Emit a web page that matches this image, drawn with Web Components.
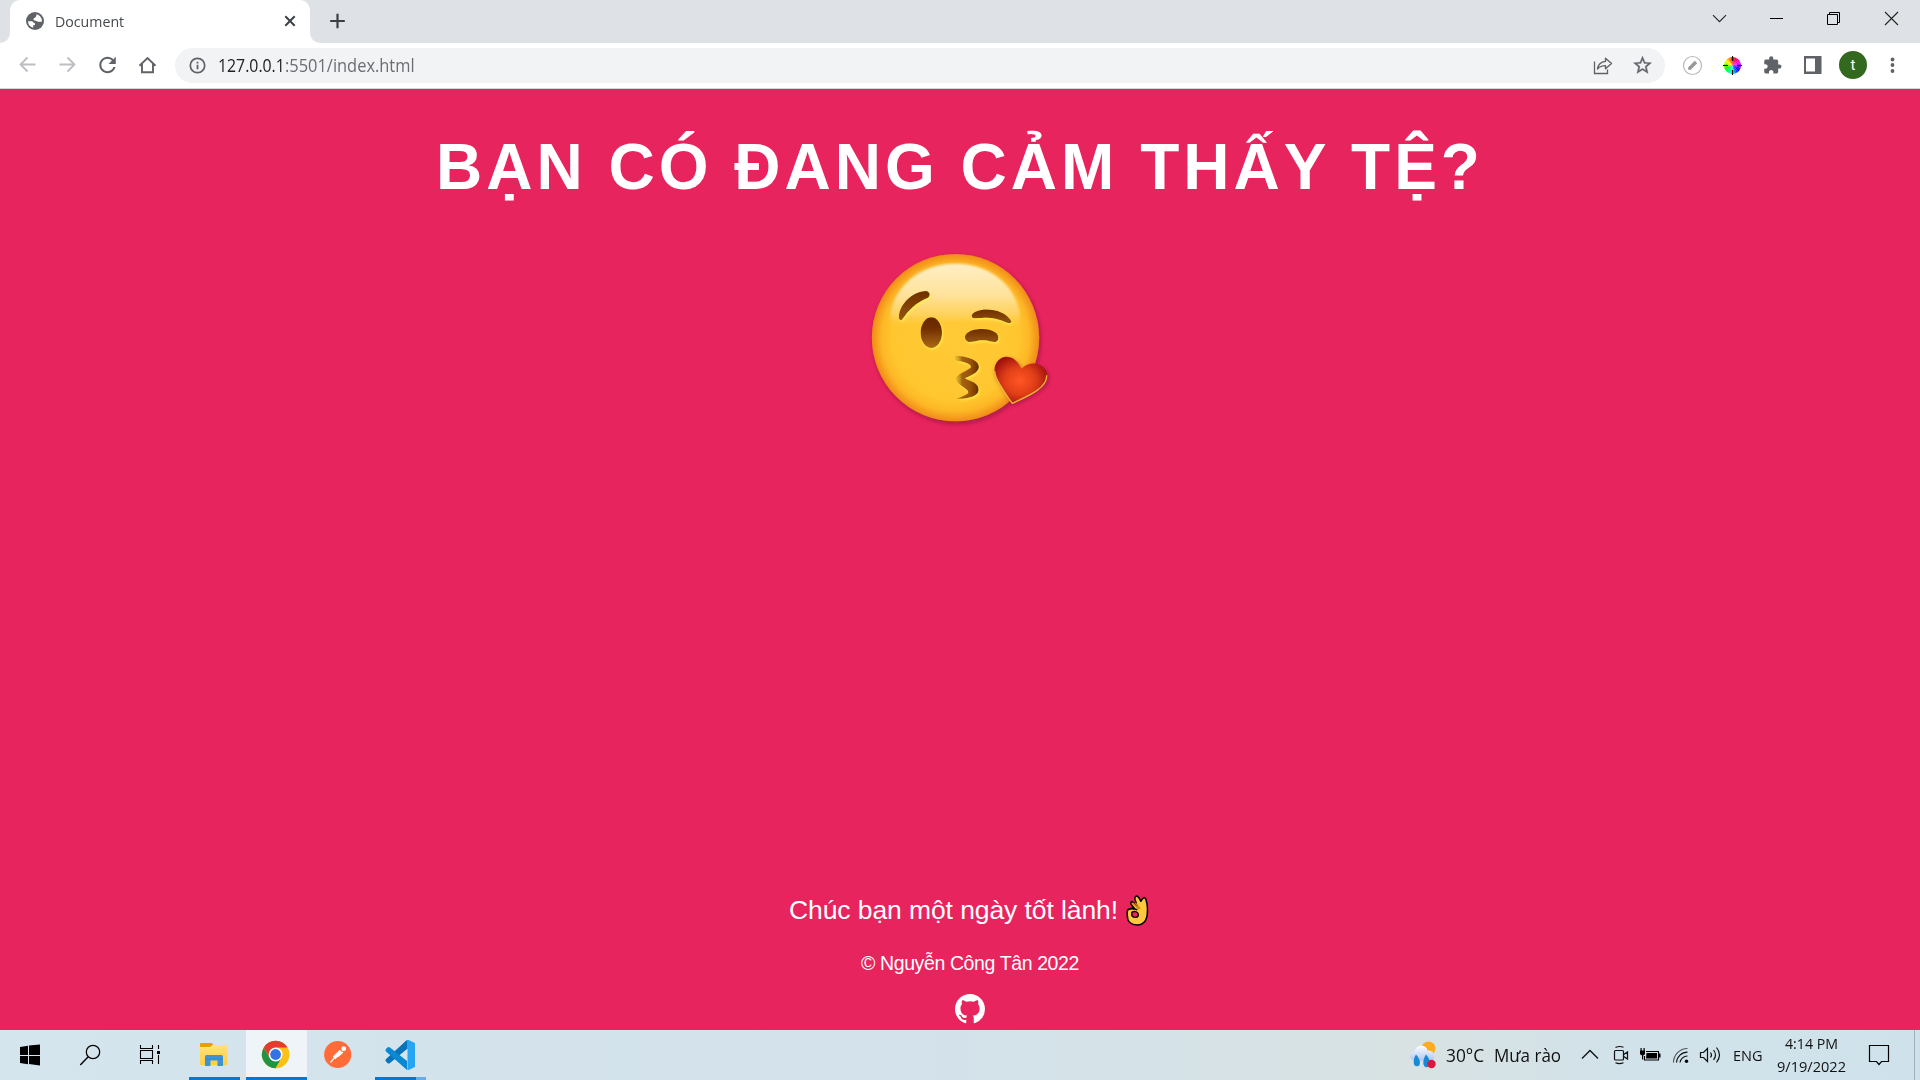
<!DOCTYPE html>
<html lang="vi">
<head>
<meta charset="utf-8">
<title>Document</title>
<style>
html,body{margin:0;height:100%;overflow:hidden;background:#e7245d}
</style>
</head>
<body>
<desktop-screen>
  <tab-strip slot="top"></tab-strip>
  <tool-bar slot="top"></tool-bar>
  <mood-page>
    <fit-text slot="title" width="1048">BẠN CÓ ĐANG CẢM THẤY TỆ?</fit-text>
    <fit-text slot="wish" width="329">Chúc bạn một ngày tốt lành!</fit-text>
    <fit-text slot="copy" width="218">© Nguyễn Công Tân 2022</fit-text>
  </mood-page>
  <task-bar slot="bottom"></task-bar>
</desktop-screen>
<script>
const wheel = Array.from({length:24},(_,i)=>{
  const a=(i*15-90)*Math.PI/180,b=((i+1)*15-89.5)*Math.PI/180,r=8.5;
  return `<path fill="hsl(${(360-i*15)%360} 100% 50%)" d="M19.5 22.5L${19.5+r*Math.cos(a)} ${22.5+r*Math.sin(a)}L${19.5+r*Math.cos(b)} ${22.5+r*Math.sin(b)}Z"/>`;
}).join('');

// name: [width, height, markup, optional viewBox]
const ICONS = {
  globe:[18,18,`<circle cx="9" cy="9" r="9" fill="#5f6368"/><path fill="#fff" d="M2 9.300L5.600 9.200C7.300 9.300 7.300 11.200 9 11.200L9 13 7.200 13.200 7.200 15.700A7 7 0 0 1 2 9.300zM10.200 2.200A7 7 0 0 1 16 9.400C14.500 10.300 13.400 9.300 12.500 10 11.500 8.800 9.600 9.300 8 8.200 6.700 7.300 7.600 5.800 9.300 5.700 9.300 4.400 11 4.500 10.200 2.200z"/>`],
  tabx:[12,12,`<path d="M1.300 1.300l9.400 9.400M10.700 1.300l-9.400 9.400" stroke="#3c4043" stroke-width="2"/>`],
  plus:[16,16,`<path d="M8.500 .7v14.600M1.200 8h14.600" stroke="#3c4043" stroke-width="2.200"/>`],
  caret:[57,37,`<path d="M21 15.200l6.500 6.500 6.500-6.500" fill="none" stroke="#222" stroke-width="1.100"/>`],
  min:[57,37,`<path d="M21 18.500h13" stroke="#000"/>`],
  restore:[57,37,`<path d="M21.500 14.500h10v10h-10zM23.500 14.500v-2h10v10h-2" fill="none" stroke="#000"/>`],
  close:[57,37,`<path d="M22 12l13 13M35 12l-13 13" stroke="#222" stroke-width="1.100"/>`],
  back:[40,45,`<path d="M27.500 21.500H12.500M19.500 14.500l-7 7 7 7" fill="none" stroke="#bcbec1" stroke-width="1.800"/>`],
  fwd:[40,45,`<path d="M11.500 21.500h15M19.500 14.500l7 7-7 7" fill="none" stroke="#bcbec1" stroke-width="1.800"/>`],
  reload:[40,45,`<path transform="translate(7.200 9.600) scale(1.030)" fill="#5f6368" d="M17.650 6.350C16.200 4.900 14.210 4 12 4c-4.420 0-7.990 3.580-7.990 8s3.570 8 7.990 8c3.730 0 6.840-2.550 7.730-6h-2.080c-.82 2.330-3.040 4-5.650 4-3.310 0-6-2.690-6-6s2.690-6 6-6c1.660 0 3.140.69 4.220 1.780L13 11h7V4l-2.350 2.350z"/>`],
  home:[40,45,`<path d="M11.500 22.700L19.500 15l8 7.700M14 21v8.300h11V21" fill="none" stroke="#5f6368" stroke-width="1.900"/>`],
  info:[17,17,`<circle cx="8.500" cy="8.500" r="7.200" fill="none" stroke="#5f6368" stroke-width="1.700"/><path d="M8.500 7.700v4.500M8.500 4.700v1.700" stroke="#5f6368" stroke-width="1.800"/>`],
  share:[40,35,`<path d="M11.500 13.500v12h13v-4" fill="none" stroke="#5f6368" stroke-width="1.300"/><path d="M22.500 10.200l6 5.300-6 5.300v-3.200c-4 0-6 .9-8 3.400.5-4 3-7 8-7.600z" fill="none" stroke="#5f6368" stroke-width="1.400" stroke-linejoin="round"/>`],
  star:[40,35,`<path transform="translate(8.600 6.300) scale(.91)" fill="#5f6368" stroke="#5f6368" stroke-width=".3" d="M22 9.240l-7.190-.62L12 2 9.190 8.630 2 9.240l5.460 4.730L5.820 21 12 17.270 18.180 21l-1.630-7.030L22 9.240zM12 15.400l-3.760 2.270 1-4.280-3.320-2.880 4.380-.38L12 6.100l1.710 4.040 4.380.38-3.320 2.880 1 4.280L12 15.400z"/>`],
  pen:[40,45,`<circle cx="19.500" cy="22.500" r="9" fill="#fff" stroke="#b8b8b8" stroke-width="1.200"/><path d="M16 26l7-7" stroke="#999" stroke-width="3.400"/><path d="M15 27l.7-2.500 1.800 1.800z" fill="#999"/>`],
  wheel:[40,45,wheel+`<path d="M19.500 13v5M19.500 27v5M10 22.500h5M24 22.500h5" stroke="#111" stroke-width="1.100"/>`],
  puzzle:[40,45,`<path transform="translate(9.600 12.400) scale(.82)" fill="#5f6368" d="M20.500 11H19V7c0-1.100-.9-2-2-2h-4V3.500C13 2.120 11.880 1 10.500 1S8 2.120 8 3.500V5H4c-1.100 0-1.990.9-1.990 2v3.800H3.500c1.490 0 2.700 1.210 2.700 2.700s-1.210 2.700-2.700 2.700H2V20c0 1.100.9 2 2 2h3.800v-1.500c0-1.490 1.210-2.700 2.700-2.700 1.490 0 2.700 1.210 2.700 2.700V22H17c1.100 0 2-.9 2-2v-4h1.500c1.380 0 2.500-1.120 2.500-2.500S21.880 11 20.500 11z"/>`],
  side:[40,45,`<path fill="#5f6368" fill-rule="evenodd" d="M11 13h17.500v18H11zM13 15.500v13h9v-13z"/>`],
  dots:[40,45,`<g fill="#5f6368"><circle cx="19.500" cy="16.500" r="1.900"/><circle cx="19.500" cy="22" r="1.900"/><circle cx="19.500" cy="28" r="1.900"/></g>`],
  kiss:[220,200,`<defs>
    <radialGradient id="f" cx=".5" cy=".5" r=".5"><stop offset="0" stop-color="#ffca36"/><stop offset=".75" stop-color="#ffc62f"/><stop offset=".88" stop-color="#fdb827"/><stop offset="1" stop-color="#f18b17"/></radialGradient>
    <linearGradient id="g" x1="0" y1="0" x2="0" y2="1"><stop offset="0" stop-color="#ffeec5"/><stop offset=".5" stop-color="#ffe29a"/><stop offset=".8" stop-color="#ffd568" stop-opacity=".8"/><stop offset="1" stop-color="#ffca36" stop-opacity="0"/></linearGradient>
    <linearGradient id="b" x1="0" y1="0" x2="0" y2="1"><stop offset="0" stop-color="#6a2900"/><stop offset=".35" stop-color="#702e02"/><stop offset="1" stop-color="#ad6a10"/></linearGradient>
    <linearGradient id="w" x1="0" y1="0" x2="0" y2="1"><stop offset="0" stop-color="#6f2e02"/><stop offset="1" stop-color="#95540a"/></linearGradient>
    <linearGradient id="m" x1="0" y1="0" x2="1" y2="0"><stop offset="0" stop-color="#a9670d" stop-opacity=".1"/><stop offset=".3" stop-color="#a3610b"/><stop offset=".65" stop-color="#985307"/><stop offset="1" stop-color="#6a2900"/></linearGradient>
    <radialGradient id="h" cx=".48" cy=".52" r=".58"><stop offset="0" stop-color="#ff5724"/><stop offset=".5" stop-color="#e23f18"/><stop offset="1" stop-color="#9c100c"/></radialGradient>
    <filter id="s" x="-20%" y="-20%" width="140%" height="140%"><feDropShadow dx="4" dy="7" stdDeviation="6" flood-color="#7a0c35" flood-opacity=".6"/></filter>
    <filter id="l" x="-30%" y="-30%" width="160%" height="160%"><feDropShadow dx="3" dy="4" stdDeviation="3" flood-color="#fff04a" flood-opacity=".9"/></filter>
    <filter id="q" x="-10%" y="-10%" width="120%" height="120%"><feGaussianBlur stdDeviation="3.500"/></filter></defs>
    <circle cx="316.500" cy="308" r="251" fill="url(#f)" filter="url(#s)"/>
    <path d="M122 278C108 184 188 86 316 86S524 184 509 278C450 252 190 252 122 278z" fill="url(#g)" filter="url(#q)"/>
    <g filter="url(#l)">
    <path d="M147 249C145 211 187 168 228 168C240 169 243 182 234 188C197 203 177 224 156 254Q148 258 147 249z" fill="url(#w)"/>
    <ellipse cx="244" cy="293" rx="32" ry="46" fill="url(#b)"/>
    <path d="M365 242C373 215 462 214 485 260Q482 267 471 263C440 249 417 246 378 250Q366 251 365 242z" fill="url(#w)"/>
    <path d="M347 314C338 296 363 281 398 282C433 283 451 298 444 315C435 329 421 315 398 316C373 317 355 328 347 314z" fill="url(#w)"/></g>
    <path d="M314 362C348 363 386 373 387 395C386 414 362 421 345 430C362 440 387 443 386 466C385 486 347 493 318 492C343 482 359 477 354 469C350 459 318 447 318 432C318 416 355 408 363 396C360 382 335 381 314 376z" fill="url(#m)" filter="url(#l)"/>
    <path d="M487 504L437 424C418 371 484 335 514 401C552 365 605 400 589 434C582 459 529 484 487 504z" fill="url(#h)" filter="url(#s)"/>
    <path d="M434 408C436 437 469 482 487 505C524 487 592 462 590 421" fill="none" stroke="#f4b532" stroke-width="4" stroke-linejoin="round"/>`,'0 0 660 600'],
  ok:[22,31,`<path fill="#ffc83d" stroke="#000" stroke-width="4.500" stroke-linejoin="round" d="M4 43Q12 36 24 40L14 27Q11 19 17 19Q23 23 31 31L25 12Q24 2 32 3Q38 8 42 18Q46 12 48 10Q53 4 57 13C64 36 62 48 60 62C56 79 48 87 32 87C15 87 3 78 3 61Q1 49 4 43z"/><path d="M26 23L40 40M19 23L36 41" stroke="#d08b1c" stroke-width="4" fill="none"/><path d="M16 50C22 46 34 47 35 57C35 67 20 67 16 60z" fill="#e7245d" stroke="#000" stroke-width="4"/><path d="M5 43Q16 37 32 43" fill="none" stroke="#000" stroke-width="4"/>`,'0 0 62 90'],
  github:[30,30,`<path fill="#fff" d="M8 0C3.580 0 0 3.580 0 8c0 3.540 2.290 6.530 5.470 7.590.4.07.55-.17.55-.38 0-.19-.01-.82-.01-1.490-2.010.37-2.530-.49-2.690-.94-.09-.23-.48-.94-.82-1.130-.28-.15-.68-.52-.01-.53.63-.01 1.080.58 1.230.82.72 1.210 1.870.87 2.330.66.07-.52.28-.87.51-1.070-1.780-.2-3.640-.89-3.640-3.950 0-.87.31-1.590.82-2.150-.08-.2-.36-1.020.08-2.120 0 0 .67-.21 2.200.82.64-.18 1.320-.27 2-.27.68 0 1.360.09 2 .27 1.530-1.040 2.200-.82 2.200-.82.44 1.100.16 1.920.08 2.120.51.56.82 1.270.82 2.150 0 3.070-1.870 3.750-3.650 3.950.29.25.54.73.54 1.480 0 1.070-.01 1.930-.01 2.200 0 .21.15.46.55.38A8.013 8.013 0 0016 8c0-4.420-3.580-8-8-8z"/>`,'0 0 16 16'],
  start:[60,50,`<path d="M20 17l8-1.200V25h-8zM29 15.600L40 14.500V25H29zM20 26h8v8.200L20 33zM29 26h11v9.500l-11-1.600z"/>`],
  search:[60,50,`<circle cx="33" cy="22" r="6.700" fill="none" stroke="#000" stroke-width="1.250"/><path d="M28.200 26.800L20.300 35" stroke="#000" stroke-width="1.400"/>`],
  view:[60,50,`<path d="M20.500 15v3.500h12V15M20.500 20.500h12v8h-12zM20.500 34v-3.500h12V34M38.500 15v4M38.500 25v9" fill="none" stroke="#000" stroke-width="1.100"/><path d="M37 21h3v3h-3z"/>`],
  folder:[51,50,`<defs><linearGradient id="y" x2="0" y2="1"><stop stop-color="#ffe17d"/><stop offset="1" stop-color="#ffce45"/></linearGradient></defs><path d="M11 14q0-1 1-1h10.500q1.500 0 1.500 2l-1 2H11z" fill="#e3a107"/><path d="M11 17.500h9.500l3-2.500h14q1 0 1 1v18.500q0 .7-1 .7H12q-1 0-1-1z" fill="url(#y)"/><path d="M16 36v-9.500q0-1.500 1.500-1.500h15q1.500 0 1.500 1.500V36h-5.500v-5.500h-7V36z" fill="#3f93d2"/><path d="M16 29h18" stroke="#338bcc"/>`],
  chrome:[61,50,`<g transform="translate(29.600 24.500)"><circle r="13.700" fill="#fbc116"/><path d="M-11.870-6.850A13.700 13.700 0 0 1 11.870-6.850L0-6.850 -5.900 3.400z" fill="#e33b2e"/><path d="M-11.870-6.850A13.700 13.700 0 0 0 0 13.700L5.930 3.430-5.930 3.430z" fill="#229342"/><path d="M0 13.700A13.700 13.700 0 0 0 11.870-6.850L0-6.850 5.930 3.430z" fill="#fbc116"/><circle r="6.900" fill="#fff"/><circle r="5.400" fill="#3074e8"/></g>`],
  postman:[68,50,`<circle cx="30.700" cy="24.500" r="13.600" fill="#ff6c37"/><g stroke="#fff" fill="none"><path d="M27 28l7-7" stroke-width="3.600"/><path d="M28 27L23.500 32.500M31 26.500l5-4.500" stroke-width="1.200"/></g><circle cx="36.700" cy="18.700" r="2.400" fill="#fff"/>`],
  code:[51,50,`<path d="M32 10l-21 19q-1.300 1.300 0 2.600l1.400 1.400q1.300 1 2.600 0L32 19z" fill="#0873b9"/><path d="M32 40L11 21.500q-1.300-1.300 0-2.600l1.400-1.400q1.300-1 2.600 0L32 31z" fill="#0989d1"/><path d="M32 10l1.500 0 6.500 3v24l-6.500 3L31 39q1.500.4 1.500-1.500v-25Q32.500 11 31 11z" fill="#27a5f2"/><path d="M31 11q1.500-.3 1.500 1.500V19l-6-3z" fill="#0873b9"/>`],
  weather:[30,32,`<defs><linearGradient id="c" x2="0" y2="1"><stop stop-color="#fafdff"/><stop offset="1" stop-color="#afc5ee"/></linearGradient></defs><circle cx="19.500" cy="9.500" r="7" fill="#ffad20"/><path d="M6.500 21.500C-1 21-.5 12.500 5.500 12.500C7 4.500 18 5.500 18.500 11.500C26 10.500 28.500 21.500 21 22z" fill="url(#c)"/><path d="M7 15.500c5 5 5 11.500 1.500 11.800C4 28 3.500 21 7 15.500z" fill="#148bd9"/><path d="M17 15.500c5 5 5 12 1 12.800C13 28.500 13.500 20.500 17 15.500z" fill="#148bd9"/><circle cx="22.500" cy="25" r="4.200" fill="#e0153c"/>`],
  up:[30,50,`<path d="M7 28.500l8-8 8 8" fill="none" stroke="#111" stroke-width="1.300"/>`],
  meet:[30,50,`<path d="M10.500 20.500h7q1 0 1 1v7.500q0 1-1 1h-7q-1 0-1-1v-7.500q0-1 1-1zM18.800 24.500l3.700-2.500v7l-3.700-2.500M10.500 17.500q3.700-1.800 8-.3M10.500 32.800q3.700 1.600 8 0" fill="none" stroke="#111" stroke-width="1.200"/>`],
  battery:[30,50,`<path d="M11 21.500h12.500v8.500h-14v-4" fill="none" stroke="#000" stroke-width="1.100"/><path d="M11.500 23H22v5.500H11zM24 23.500h1.500v4H24z"/><path d="M5 20.500h5v3q0 2-2.500 2T5 23.500zM5.500 18h1.200v3H5.500zM8.500 18h1.200v3H8.500zM7 25h1.200v4.500H7z"/>`],
  wifi:[30,50,`<g fill="none" stroke-width="1.150"><path d="M8.500 32.500A14 14 0 0 1 22.500 18.500" stroke="#555"/><path d="M11.500 32.500A11 11 0 0 1 22.500 22.200M15 32.500A7.500 7.500 0 0 1 22.500 26" stroke="#111"/></g><circle cx="21.500" cy="31.300" r="1.700"/>`],
  sound:[30,50,`<path d="M5.500 22.500h3l4-4v13l-4-4h-3zM15.500 22.500q2 2.500 0 5M18.500 20q4 5 0 10M21.500 17.500q6 7.500 0 15" fill="none" stroke="#111" stroke-width="1.200"/>`],
  note:[30,50,`<path d="M6.500 15.500h19v16h-7l-2.500 3-2.500-3h-7z" fill="none" stroke="#000" stroke-width="1.200"/>`]
};

customElements.define('ui-icon', class extends HTMLElement {
  connectedCallback(){
    const [w,h,m,v]=ICONS[this.getAttribute('name')];
    this.attachShadow({mode:'open'}).innerHTML=`<style>:host{display:block;flex:none;width:${w}px;height:${h}px}svg{display:block;overflow:visible}</style><svg width="${w}" height="${h}" viewBox="${v||`0 0 ${w} ${h}`}">${m}</svg>`;
  }
});

// Spreads its text evenly over a given width, or condenses the letters when "squeeze" is set.
customElements.define('fit-text', class extends HTMLElement {
  connectedCallback(){
    const w=+this.getAttribute('width');
    this.attachShadow({mode:'open'}).innerHTML=`<style>:host{display:block;flex:none;width:${w}px;white-space:nowrap}span{display:inline-block;transform-origin:0 50%}</style><span><slot></slot></span>`;
    requestAnimationFrame(()=>this.fit(w));
    this.fit(w);
  }
  fit(w){
    const s=this.shadowRoot.querySelector('span');
    if(this.hasAttribute('squeeze')){
      s.style.transform=`scaleX(${w/(s.offsetWidth||w)})`;
      return;
    }
    s.style.letterSpacing='0.001px';
    const n=[...this.textContent.trim().normalize('NFC')].length;
    s.style.letterSpacing=((w-s.getBoundingClientRect().width)/n)+'px';
  }
});

const define=(name,html)=>customElements.define(name,class extends HTMLElement{
  constructor(){super();this.attachShadow({mode:'open'}).innerHTML=html;}
});

define('desktop-screen',`<style>:host{display:flex;flex-direction:column;width:1920px;height:1080px;overflow:hidden;font-family:"Open Sans","Noto Sans",sans-serif}</style>
<slot name="top"></slot><slot></slot><slot name="bottom"></slot>`);

define('tab-strip',`<style>
:host{display:flex;height:43px;flex:none;background:#dee1e6;box-sizing:border-box}
.foot{width:10px;background:#fff;display:flex}.foot i{flex:1;background:#dee1e6}
.l i{border-radius:0 0 10px 0}.r i{border-radius:0 0 0 10px}
.tab{width:300px;box-sizing:border-box;background:#fff;border-radius:10px 10px 0 0;display:flex;align-items:center;padding:0 14px 1px 16px;font-size:15px;color:#45494d}
.tab fit-text{margin:-1px auto 0 11px}
.plus{margin:13px 0 0 9px}.win{display:flex;margin-left:auto}
</style><div class="foot l"><i></i></div><div class="tab"><ui-icon name="globe"></ui-icon><fit-text squeeze width="69">Document</fit-text><ui-icon name="tabx"></ui-icon></div><div class="foot r"><i></i></div><ui-icon class="plus" name="plus"></ui-icon>
<div class="win"><ui-icon name="caret"></ui-icon><ui-icon name="min"></ui-icon><ui-icon name="restore"></ui-icon><ui-icon name="close"></ui-icon></div>`);

define('tool-bar',`<style>
:host{display:flex;height:46px;flex:none;box-sizing:border-box;background:#fff;border-bottom:1px solid #d5d7da;padding-left:8px}
.box{display:flex;align-items:center;width:1490px;height:35px;margin:5px 0 0 7px;border-radius:18px;background:#f1f3f4;box-sizing:border-box;padding:0 2px 0 14px;font-size:17.500px;color:#6a6e73}
.box fit-text{margin-top:-2px}
.box .h{color:#202124;margin-left:12px}.sp{flex:1}
.ext{display:flex;margin-left:8px}
.av{width:28px;height:28px;border-radius:50%;background:#33691e;color:#fff;font:15px/28px Roboto,sans-serif;text-align:center;margin:8px 6px 0 6px}
</style><ui-icon name="back"></ui-icon><ui-icon name="fwd"></ui-icon><ui-icon name="reload"></ui-icon><ui-icon name="home"></ui-icon>
<div class="box"><ui-icon name="info"></ui-icon><fit-text class="h" squeeze width="67">127.0.0.1</fit-text><fit-text squeeze width="129.500">:5501/index.html</fit-text><span class="sp"></span><ui-icon name="share"></ui-icon><ui-icon name="star"></ui-icon></div>
<div class="ext"><ui-icon name="pen"></ui-icon><ui-icon name="wheel"></ui-icon><ui-icon name="puzzle"></ui-icon><ui-icon name="side"></ui-icon><div class="av">t</div><ui-icon name="dots"></ui-icon></div>`);

define('mood-page',`<style>
:host{display:flex;flex-direction:column;align-items:center;flex:1;background:#e7245d;color:#fff;font-family:"Liberation Sans",Arial,sans-serif}
h1{margin:14px 0 0;font-size:64px;line-height:128px;height:132px}
footer{margin-top:auto;padding-left:20px;display:flex;flex-direction:column;align-items:center}
.wish{display:flex;height:50px;font-size:26.500px;line-height:50px;padding-right:3px}.wish ui-icon{margin:10px 0 0 8px}
.copy{height:55px;line-height:56px;font-size:19.500px}
.gh{height:40px;padding-top:4px;box-sizing:border-box}
</style><h1><slot name="title"></slot></h1><ui-icon name="kiss"></ui-icon>
<footer><div class="wish"><slot name="wish"></slot><ui-icon name="ok"></ui-icon></div><div class="copy"><slot name="copy"></slot></div><div class="gh"><ui-icon name="github"></ui-icon></div></footer>`);

define('task-bar',`<style>
:host{display:flex;height:50px;flex:none;background:linear-gradient(90deg,#d5e5ed,#d3e2ea 50%,#d8e2e3 74%,#d1e2ea 85%,#cfe2eb);color:#111;font-size:15px}
.app{height:50px;box-shadow:inset 0 -3px #0078d7}
.f{margin-left:9px}.c{margin-left:6px;background:#eff4f8}
.code{display:flex}.more{width:10px;height:3px;align-self:flex-end;background:#66aee7}
.tray{display:flex;margin-left:auto;align-items:center}
.w{margin-right:7px}.weather{font-size:17.800px;display:flex;gap:10px;margin-right:14px}
.eng{margin:0 14px 0 8px}.clock{display:flex;flex-direction:column;align-items:center;height:46px;margin-right:17px;font-size:15px;line-height:23px}
.edge{width:5px;height:50px;border-left:1px solid #a3b0b8;margin-left:21px}
</style><ui-icon name="start"></ui-icon><ui-icon name="search"></ui-icon><ui-icon name="view"></ui-icon>
<ui-icon class="app f" name="folder"></ui-icon><ui-icon class="app c" name="chrome"></ui-icon><ui-icon name="postman"></ui-icon><div class="code"><ui-icon class="app" style="width:41px" name="code"></ui-icon><span class="more"></span></div>
<div class="tray"><ui-icon class="w" name="weather"></ui-icon><div class="weather"><fit-text squeeze width="38">30°C</fit-text><fit-text squeeze width="67">Mưa rào</fit-text></div>
<ui-icon name="up"></ui-icon><ui-icon name="meet"></ui-icon><ui-icon name="battery"></ui-icon><ui-icon name="wifi"></ui-icon><ui-icon name="sound"></ui-icon>
<fit-text class="eng" squeeze width="30">ENG</fit-text><div class="clock"><fit-text squeeze width="53">4:14 PM</fit-text><fit-text squeeze width="69">9/19/2022</fit-text></div><ui-icon name="note"></ui-icon><span class="edge"></span></div>`);
</script>
</body>
</html>
